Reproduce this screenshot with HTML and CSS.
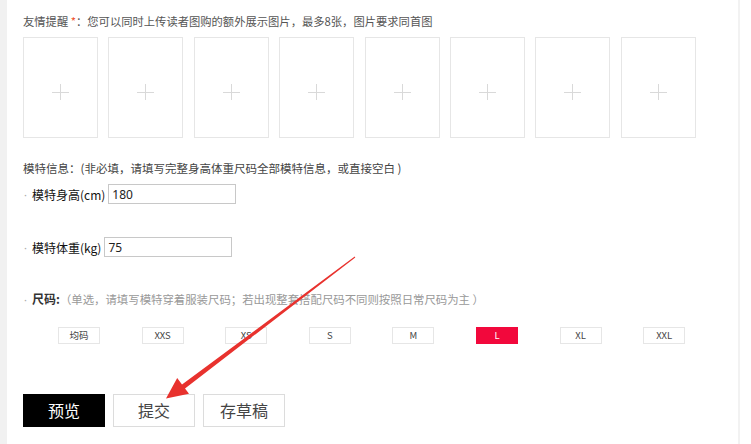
FILE: index.html
```html
<!DOCTYPE html>
<html>
  <head>
    <meta charset='UTF-8'>
    <title>上传图片</title>
    <link rel="stylesheet" href="styles.css">
  </head>
  <body>
    <div class='page'>
      <div class='page__side'></div>
      <div class='page__main'>
        <p class='main__tip'>友情提醒 <span class='tip__star'>*</span>：您可以同时上传读者图购的额外展示图片，最多8张，图片要求同首图</p>
        <div class='main__pics'>
          <div class='pics__item'><span class='item__plus'></span></div>
          <div class='pics__item'><span class='item__plus'></span></div>
          <div class='pics__item'><span class='item__plus'></span></div>
          <div class='pics__item'><span class='item__plus'></span></div>
          <div class='pics__item'><span class='item__plus'></span></div>
          <div class='pics__item'><span class='item__plus'></span></div>
          <div class='pics__item'><span class='item__plus'></span></div>
          <div class='pics__item'><span class='item__plus'></span></div>
        </div>
        <p class='main__model'>模特信息：(非必填，请填写完整身高体重尺码全部模特信息，或直接空白 )</p>
        <div class='main__field'>
          <span class='field__dot'>·</span>
          <label class='field__label'>模特身高(cm)</label>
          <input class='field__input' type='text' value='180'>
        </div>
        <div class='main__field main__field--second'>
          <span class='field__dot'>·</span>
          <label class='field__label'>模特体重(kg)</label>
          <input class='field__input' type='text' value='75'>
        </div>
        <p class='main__size'><span class='field__dot'>·</span><b class='size__name'>尺码:</b>（单选，请填写模特穿着服装尺码；若出现整套搭配尺码不同则按照日常尺码为主 ）</p>
        <div class='main__sizes'>
          <div class='sizes__btn'>均码</div>
          <div class='sizes__btn'>XXS</div>
          <div class='sizes__btn'>XS</div>
          <div class='sizes__btn'>S</div>
          <div class='sizes__btn'>M</div>
          <div class='sizes__btn sizes__btn--on'>L</div>
          <div class='sizes__btn'>XL</div>
          <div class='sizes__btn'>XXL</div>
        </div>
        <div class='main__actions'>
          <div class='actions__btn actions__btn--dark'>预览</div>
          <div class='actions__btn'>提交</div>
          <div class='actions__btn'>存草稿</div>
        </div>
      </div>
      <div class='page__rule'></div>

      <svg class='page__arrow' width='751' height='444' viewBox='0 0 751 444'>
        <polygon fill='#e8322e' points='354.7,256.6 182,384.5 177.2,378 166,398.5 189,393.8 185,388.5 355.3,257.4'/>
      </svg>
    </div>
  </body>
</html>
```

FILE: styles.css
```css
html, body {
    margin: 0;
    background-color: #fff;
    font-family: 'Noto Sans CJK SC', 'Noto Sans', sans-serif;
    color: #333;
  }

  .page {
    position: relative;
    display: flex;
    width: 751px;
    height: 444px;
    overflow: hidden;
  }

  .page__side {
    width: 7px;
    background-color: #f1f1f1;
  }

  .page__main {
    width: 715px;
    padding: 13px 0 0 16px;
  }

  .page__rule {
    width: 2px;
    background-color: #f2f2f2;
  }

  .page__arrow {
    position: absolute;
    top: 0;
    left: 0;
    pointer-events: none;
  }

  p {
    margin: 0;
  }

  .main__tip {
    height: 16px;
    font-size: 11.3px;
    line-height: 16px;
    color: #555;
  }

  .tip__star {
    color: #f0522e;
  }

  .main__pics {
    display: flex;
    gap: 10.4px;
    margin-top: 8px;
  }

  .pics__item {
    display: flex;
    align-items: center;
    justify-content: center;
    width: 75px;
    height: 101px;
    padding-top: 8px;
    border: 1px solid #e6e6e6;
    box-sizing: border-box;
  }

  .item__plus {
    position: relative;
    width: 17px;
    height: 16px;
  }

  .item__plus::before,
  .item__plus::after {
    content: '';
    position: absolute;
    background-color: #d9d9d9;
  }

  .item__plus::before {
    top: 8px;
    left: 0;
    width: 17px;
    height: 1px;
  }

  .item__plus::after {
    top: 0;
    left: 8px;
    width: 1px;
    height: 16px;
  }

  .main__model {
    height: 16px;
    margin-top: 22px;
    font-size: 11.5px;
    line-height: 16px;
    color: #444;
  }

  .main__field {
    display: flex;
    align-items: center;
    height: 20px;
    margin-top: 8px;
  }

  .main__field--second {
    margin-top: 33px;
  }

  .field__dot {
    display: inline-block;
    width: 6px;
    margin-right: 2px;
    padding-left: 1px;
    font-family: 'Noto Sans', sans-serif;
    font-size: 11px;
    color: #aaa;
  }

  .field__label {
    margin-right: 3px;
    font-size: 12px;
    font-weight: normal;
    color: #111;
  }

  .field__input {
    width: 128px;
    height: 20px;
    padding: 0 3px;
    border: 1px solid #c8c8c8;
    box-sizing: border-box;
    font-family: 'Noto Sans', sans-serif;
    font-size: 12px;
    color: #222;
    outline: none;
  }

  .main__size {
    height: 16px;
    margin-top: 34px;
    font-size: 11.4px;
    line-height: 16px;
    color: #999;
  }

  .size__name {
    font-size: 12px;
    color: #333;
  }

  .main__sizes {
    display: flex;
    gap: 41.6px;
    margin-top: 20px;
    padding-left: 35px;
  }

  .sizes__btn {
    width: 42px;
    height: 17px;
    border: 1px solid #e6e6e6;
    box-sizing: border-box;
    font-size: 9.5px;
    line-height: 15px;
    text-align: center;
    color: #444;
  }

  .sizes__btn--on {
    border-color: #f2083c;
    background-color: #f2083c;
    color: #fff;
  }

  .main__actions {
    display: flex;
    gap: 8px;
    margin-top: 50px;
  }

  .actions__btn {
    width: 82px;
    height: 33px;
    border: 1px solid #dcdcdc;
    box-sizing: border-box;
    font-size: 16px;
    line-height: 31px;
    text-align: center;
    color: #444;
  }

  .actions__btn--dark {
    border-color: #000;
    background-color: #000;
    color: #fff;
  }
```
